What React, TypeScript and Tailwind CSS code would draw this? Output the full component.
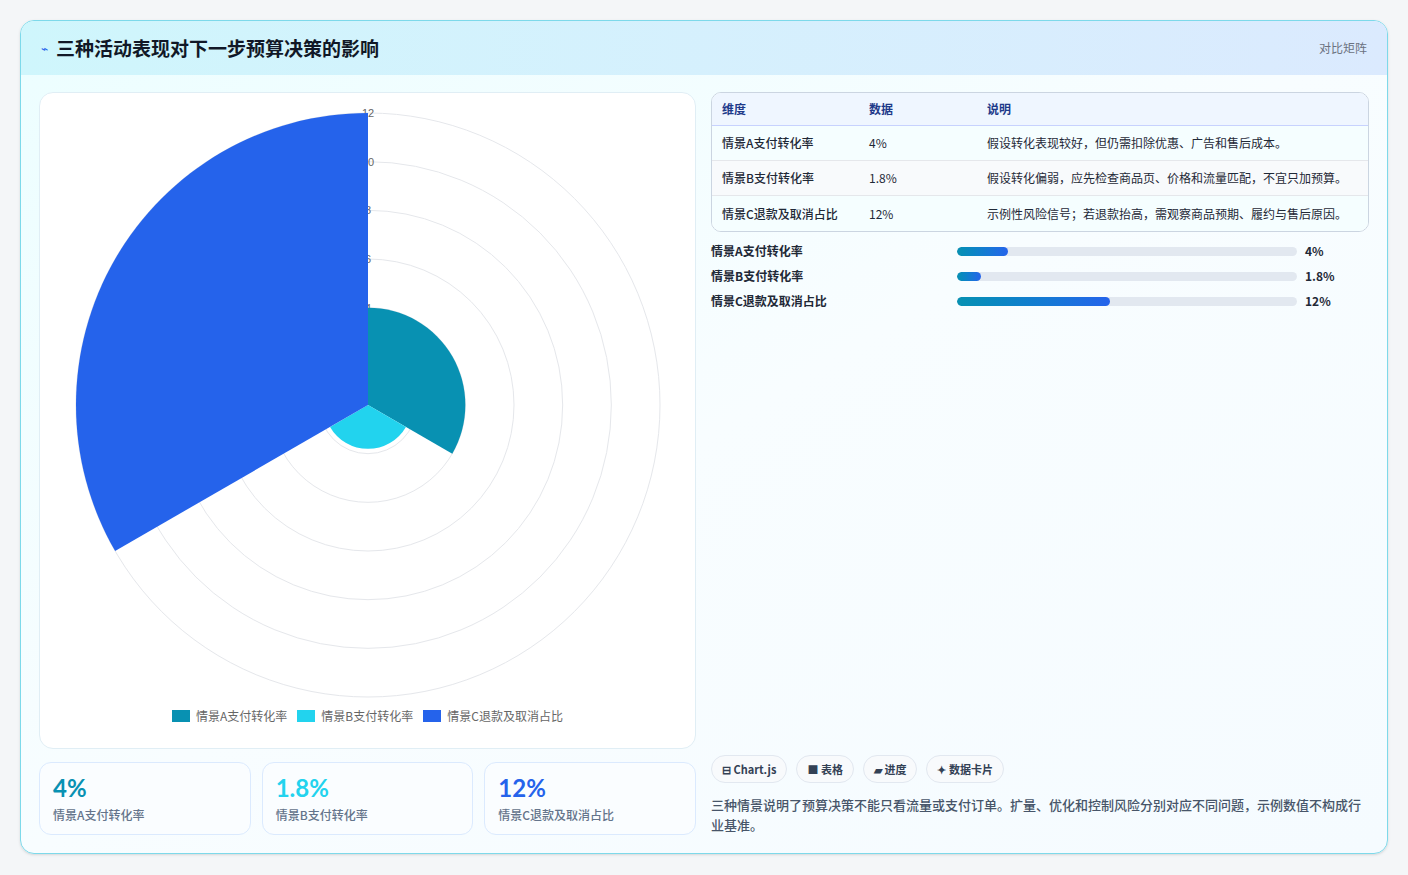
import React from "react";

const cx = 328, cy = 312; // within svg coords (svg at left 40, top 93)
const R = 292;
function arc(r: number, a0: number, a1: number) {
  const rad = (d: number) => (d * Math.PI) / 180;
  const x0 = cx + r * Math.cos(rad(a0)), y0 = cy + r * Math.sin(rad(a0));
  const x1 = cx + r * Math.cos(rad(a1)), y1 = cy + r * Math.sin(rad(a1));
  return `M${cx},${cy} L${x0},${y0} A${r},${r} 0 0 1 ${x1},${y1} Z`;
}

const rows = [
  ["情景A支付转化率", "4%", "假设转化表现较好，但仍需扣除优惠、广告和售后成本。"],
  ["情景B支付转化率", "1.8%", "假设转化偏弱，应先检查商品页、价格和流量匹配，不宜只加预算。"],
  ["情景C退款及取消占比", "12%", "示例性风险信号；若退款抬高，需观察商品预期、履约与售后原因。"],
];

export default function App() {
  const ticks = [2, 4, 6, 8, 10, 12];
  return (
    <div className="w-[1408px] h-[875px] bg-[#f4f6f8] p-[20px]" style={{ fontFamily: "'Noto Sans CJK SC', 'Noto Sans', sans-serif" }}>
      <div className="h-[834px] rounded-[14px] border border-[#7dd9ea] bg-gradient-to-br from-[#ecfeff] via-[#f8fdff] to-[#f5fbff] overflow-hidden flex flex-col shadow-sm">
        <div className="h-[55px] flex items-center justify-between px-[20px] bg-gradient-to-r from-[#cff6fc] to-[#dbeafe]">
          <div className="flex items-center gap-[8px]">
            <span className="text-[#2563eb] text-[12px]">⌁</span>
            <span className="text-[19px] font-bold text-[#111827]">三种活动表现对下一步预算决策的影响</span>
          </div>
          <span className="text-[12px] text-[#6b7280]">对比矩阵</span>
        </div>
        <div className="flex-1 flex gap-[15px] px-[18px] pt-[17px] pb-[18px]">
          <div className="w-[657px] flex flex-col gap-[13px]">
            <div className="h-[657px] rounded-[14px] border border-[#e0eef5] bg-white flex flex-col items-center">
              <svg width="655" height="610" className="shrink-0">
                {ticks.map((t) => (
                  <circle key={t} cx={cx} cy={cy} r={(t / 12) * R} fill="none" stroke="#e5e7eb" strokeWidth="1" />
                ))}
                {ticks.map((t) => (
                  <text key={"l" + t} x={cx} y={cy - (t / 12) * R + 4} fontSize="11" fill="#666" textAnchor="middle" fontFamily="Liberation Sans, sans-serif">{t}</text>
                ))}
                <path d={arc((4 / 12) * R, -90, 30)} fill="#0891b2" />
                <path d={arc((1.8 / 12) * R, 30, 150)} fill="#22d3ee" />
                <path d={arc(R, 150, 270)} fill="#2563eb" />
              </svg>
              <div className="flex items-center gap-[10px] text-[12px] text-[#666] mt-[4px]">
                <span className="flex items-center gap-[6px]"><span className="w-[18px] h-[12px] bg-[#0891b2]" />情景A支付转化率</span>
                <span className="flex items-center gap-[6px]"><span className="w-[18px] h-[12px] bg-[#22d3ee]" />情景B支付转化率</span>
                <span className="flex items-center gap-[6px]"><span className="w-[18px] h-[12px] bg-[#2563eb]" />情景C退款及取消占比</span>
              </div>
            </div>
            <div className="grid grid-cols-3 gap-[11px]">
              {[["4%", "#0891b2", "情景A支付转化率"], ["1.8%", "#22d3ee", "情景B支付转化率"], ["12%", "#2563eb", "情景C退款及取消占比"]].map(([v, c, l]) => (
                <div key={l} className="h-[73px] rounded-[12px] border border-[#dbeafe] bg-[#fafdff] px-[13px] pt-[10px]">
                  <div className="text-[24px] font-bold leading-[30px]" style={{ color: c, fontFamily: "Lato, sans-serif" }}>{v}</div>
                  <div className="text-[12px] text-[#64748b] font-medium mt-[3px]">{l}</div>
                </div>
              ))}
            </div>
          </div>
          <div className="flex-1 flex flex-col">
            <div className="rounded-[10px] border border-[#cbd5e1] overflow-hidden bg-white">
              <div className="flex h-[33px] items-center bg-[#eff6ff] border-b border-[#c7d2fe] text-[12px] font-bold text-[#1e3a8a]">
                <div className="w-[157px] pl-[10px]">维度</div>
                <div className="w-[118px]">数据</div>
                <div>说明</div>
              </div>
              {rows.map((r, i) => (
                <div key={i} className={`flex h-[35px] items-center text-[12px] text-[#1f2937] ${i < 2 ? "border-b border-[#e5e7eb]" : ""} ${i === 1 ? "bg-[#f8fafc]" : "bg-[#f5feff]"}`}>
                  <div className="w-[157px] pl-[10px] font-medium">{r[0]}</div>
                  <div className="w-[118px]">{r[1]}</div>
                  <div>{r[2]}</div>
                </div>
              ))}
            </div>
            <div className="flex flex-col gap-[9px] mt-[11px]">
              {[["情景A支付转化率", 15, "4%"], ["情景B支付转化率", 7, "1.8%"], ["情景C退款及取消占比", 45, "12%"]].map(([l, w, v]) => (
                <div key={l as string} className="flex items-center h-[16px] text-[12px] font-bold text-[#1f2937]">
                  <div className="w-[246px]">{l}</div>
                  <div className="w-[340px] h-[9px] rounded-full bg-[#e2e8f0] overflow-hidden">
                    <div className="h-full rounded-full bg-gradient-to-r from-[#0891b2] to-[#2563eb]" style={{ width: `${w}%` }} />
                  </div>
                  <div className="ml-[8px]">{v}</div>
                </div>
              ))}
            </div>
            <div className="flex-1" />
            <div className="flex gap-[9px] text-[11px] font-bold text-[#334155]">
              {["⊟ Chart.js", "■ 表格", "▰ 进度", "✦ 数据卡片"].map((t) => (
                <span key={t} className="h-[28px] px-[10px] flex items-center rounded-full border border-[#e2e8f0] bg-[#f8fafc]">{t}</span>
              ))}
            </div>
            <p className="mt-[12px] text-[13px] leading-[20px] font-medium text-[#475569]">三种情景说明了预算决策不能只看流量或支付订单。扩量、优化和控制风险分别对应不同问题，示例数值不构成行业基准。</p>
          </div>
        </div>
      </div>
    </div>
  );
}
